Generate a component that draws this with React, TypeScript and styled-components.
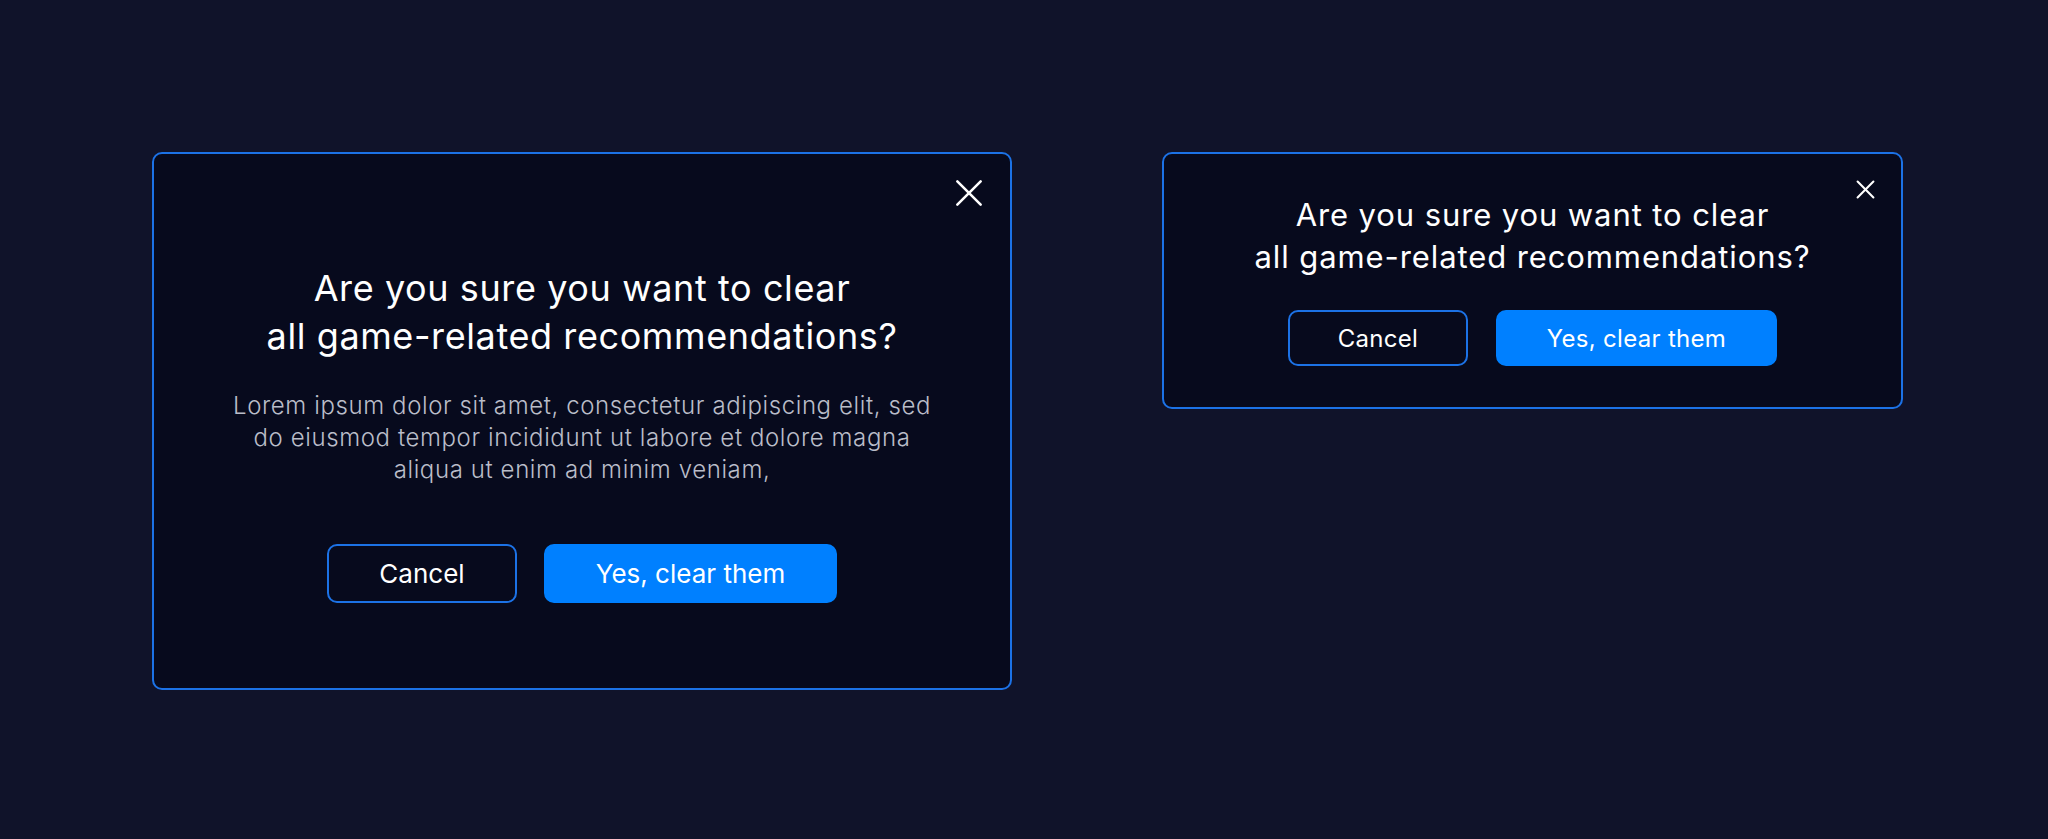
import React from 'react'
import styled, { createGlobalStyle, css } from 'styled-components'

const GlobalStyle = createGlobalStyle`
  html, body {
    margin: 0;
    padding: 0;
    background: #10132a;
    font-family: Inter, Roboto, "Noto Sans", sans-serif;
  }
`

type SizeProps = { $size: 'large' | 'small' }

const Page = styled.div`
  display: flex;
  align-items: flex-start;
  gap: 150px;
  min-height: 839px;
  box-sizing: border-box;
  padding: 152px 0 0 152px;
`

const Dialog = styled.section<SizeProps>`
  position: relative;
  box-sizing: border-box;
  display: flex;
  flex-direction: column;
  align-items: center;
  background: #070a1d;
  border: 2px solid #1c72e6;
  border-radius: 10px;
  color: #ffffff;
  text-align: center;

  ${({ $size }) =>
    $size === 'large'
      ? css`
          width: 860px;
          height: 538px;
          padding-top: 110px;
        `
      : css`
          width: 741px;
          height: 257px;
          padding-top: 40px;
        `}
`

const CloseButton = styled.button<SizeProps>`
  position: absolute;
  display: flex;
  align-items: center;
  justify-content: center;
  padding: 0;
  background: none;
  border: none;
  color: #ffffff;
  cursor: pointer;

  ${({ $size }) =>
    $size === 'large'
      ? css`
          top: 25px;
          right: 27px;
          width: 28px;
          height: 28px;
        `
      : css`
          top: 26px;
          right: 26px;
          width: 19px;
          height: 19px;
        `}
`

const Title = styled.h2<SizeProps>`
  margin: 0;
  font-weight: 400;

  ${({ $size }) =>
    $size === 'large'
      ? css`
          font-size: 36px;
          line-height: 48px;
          letter-spacing: 0.6px;
        `
      : css`
          font-size: 31px;
          line-height: 42px;
          letter-spacing: 0.9px;
        `}
`

const Body = styled.p`
  margin: 30px 0 0;
  font-size: 24px;
  line-height: 32px;
  font-weight: 300;
  letter-spacing: 0.6px;
  color: #babdc9;
`

const Actions = styled.div<SizeProps>`
  display: flex;
  justify-content: center;

  ${({ $size }) =>
    $size === 'large'
      ? css`
          margin-top: 58px;
          gap: 27px;
        `
      : css`
          margin-top: 32px;
          gap: 28px;
        `}
`

const Button = styled.button<SizeProps & { $primary?: boolean }>`
  box-sizing: border-box;
  display: flex;
  align-items: center;
  justify-content: center;
  font-family: Inter, Roboto, "Noto Sans", sans-serif;
  font-weight: 400;
  color: #ffffff;
  border-radius: 10px;
  cursor: pointer;
  border: 2px solid ${({ $primary }) => ($primary ? '#0080ff' : '#1c72e6')};
  background: ${({ $primary }) => ($primary ? '#0080ff' : 'transparent')};

  ${({ $size, $primary }) =>
    $size === 'large'
      ? css`
          height: 59px;
          width: ${$primary ? 293 : 190}px;
          font-size: 26px;
        `
      : css`
          height: 56px;
          width: ${$primary ? 281 : 180}px;
          font-size: 24px;
          letter-spacing: 0.3px;
        `}
`

const CloseIcon = ({ stroke }: { stroke: number }) => (
  <svg width="100%" height="100%" viewBox="0 0 24 24" fill="none">
    <path
      d="M2 2 L22 22 M22 2 L2 22"
      stroke="currentColor"
      strokeWidth={stroke}
      strokeLinecap="round"
    />
  </svg>
)

type ConfirmProps = {
  size: 'large' | 'small'
  body?: string[]
}

const ConfirmDialog = ({ size, body }: ConfirmProps) => (
  <Dialog $size={size}>
    <CloseButton $size={size} aria-label="Close">
      <CloseIcon stroke={size === 'large' ? 2.2 : 2.6} />
    </CloseButton>
    <Title $size={size}>
      Are you sure you want to clear
      <br />
      all game-related recommendations?
    </Title>
    {body && (
      <Body>
        {body.map((line, i) => (
          <React.Fragment key={i}>
            {i > 0 && <br />}
            {line}
          </React.Fragment>
        ))}
      </Body>
    )}
    <Actions $size={size}>
      <Button $size={size}>Cancel</Button>
      <Button $size={size} $primary>
        Yes, clear them
      </Button>
    </Actions>
  </Dialog>
)

const App = () => (
  <>
    <GlobalStyle />
    <Page>
      <ConfirmDialog
        size="large"
        body={[
          'Lorem ipsum dolor sit amet, consectetur adipiscing elit, sed',
          'do eiusmod tempor incididunt ut labore et dolore magna',
          'aliqua ut enim ad minim veniam,',
        ]}
      />
      <ConfirmDialog size="small" />
    </Page>
  </>
)

export default App
